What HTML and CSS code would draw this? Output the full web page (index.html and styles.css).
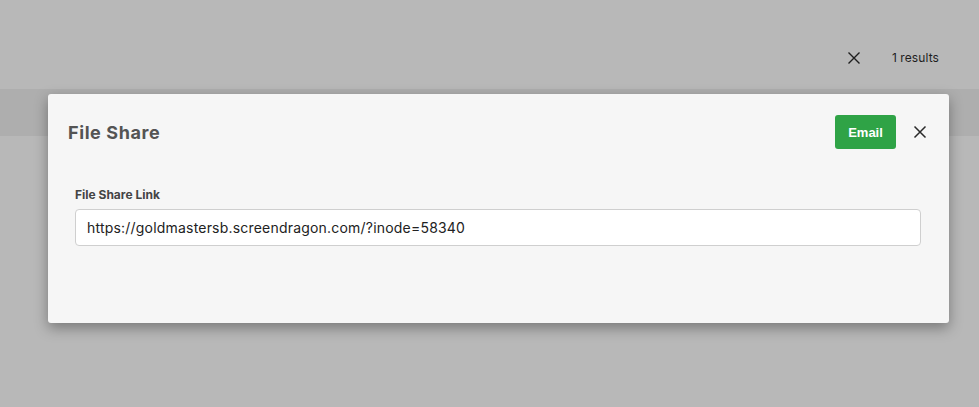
FILE: index.html
```html
<!DOCTYPE html>
<html>
<head>
<meta charset="utf-8">
<link rel="stylesheet" href="styles.css">
</head>
<body>
<div class="page">
  <header class="topbar">
    <div class="search-meta">
      <svg class="clear-icon" width="14" height="14" viewBox="0 0 14 14"><path d="M1.5 1.5L12.5 12.5M12.5 1.5L1.5 12.5" stroke="#1e1e1e" stroke-width="1.4" fill="none"/></svg>
      <span class="results">1 results</span>
    </div>
  </header>
  <div class="band"></div>
  <div class="rest"></div>

  <div class="modal">
    <div class="modal-head">
      <h2 class="modal-title">File Share</h2>
      <div class="modal-actions">
        <button class="btn-email">Email</button>
        <svg class="close-icon" width="14" height="14" viewBox="0 0 14 14"><path d="M1.5 1.5L12.5 12.5M12.5 1.5L1.5 12.5" stroke="#2a2a2a" stroke-width="1.5" fill="none"/></svg>
      </div>
    </div>
    <div class="modal-body">
      <label class="field-label">File Share Link</label>
      <div class="field-input">https://goldmastersb.screendragon.com/?inode=58340</div>
    </div>
  </div>
</div>
</body>
</html>
```

FILE: styles.css
```css
html, body {
  margin: 0;
  padding: 0;
}
body {
  background: #b8b8b8;
  font-family: Inter, "Liberation Sans", sans-serif;
  width: 979px;
  height: 407px;
  overflow: hidden;
}
.page {
  position: relative;
  height: 407px;
}
.topbar {
  height: 89px;
  display: flex;
  justify-content: flex-end;
  align-items: center;
  padding-right: 40px;
  padding-top: 26px;
  box-sizing: border-box;
}
.search-meta {
  display: flex;
  align-items: center;
  gap: 31px;
}
.clear-icon {
  display: block;
}
.results {
  font-size: 12px;
  color: #1f1f1f;
  letter-spacing: 0.1px;
}
.band {
  height: 47px;
  background: #aeaeae;
}
.modal {
  position: absolute;
  left: 48px;
  top: 94px;
  width: 901px;
  height: 229px;
  background: #f6f6f6;
  border-radius: 3px;
  box-shadow: 0 5px 14px rgba(0, 0, 0, 0.35);
  box-sizing: border-box;
}
.modal-head {
  display: flex;
  justify-content: space-between;
  align-items: center;
  padding: 21px 22px 0 20px;
}
.modal-title {
  margin: 0;
  font-family: Inter, "Liberation Sans", sans-serif;
  font-weight: 700;
  font-size: 18px;
  color: #545454;
  letter-spacing: 0.6px;
}
.modal-actions {
  display: flex;
  align-items: center;
  gap: 17px;
}
.btn-email {
  width: 61px;
  height: 34px;
  border: none;
  border-radius: 3px;
  background: #2fa346;
  color: #ffffff;
  font-family: "Liberation Sans", Arial, sans-serif;
  font-weight: 700;
  font-size: 13px;
  padding: 0;
}
.close-icon {
  display: block;
}
.modal-body {
  padding: 38px 28px 0 27px;
}
.field-label {
  display: block;
  font-size: 12px;
  font-weight: 700;
  color: #444;
  margin-bottom: 7px;
}
.field-input {
  height: 37px;
  box-sizing: border-box;
  background: #ffffff;
  border: 1px solid #cfcfcf;
  border-radius: 4px;
  padding: 0 11px;
  display: flex;
  align-items: center;
  font-size: 14px;
  color: #222;
  letter-spacing: 0.2px;
}
```
